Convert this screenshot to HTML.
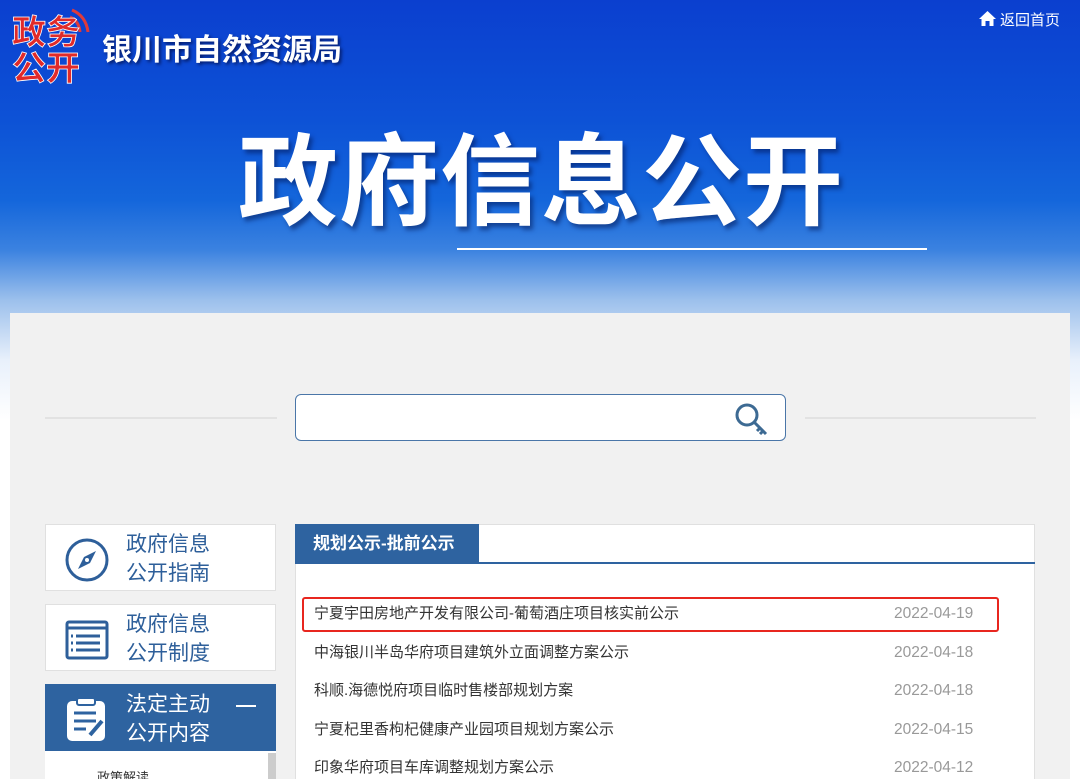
<!DOCTYPE html>
<html><head><meta charset="utf-8"><style>
*{margin:0;padding:0;box-sizing:border-box}
html{background:#fff;width:1080px;height:779px;overflow:hidden}
body{width:1080px;height:779px;overflow:hidden;position:relative;font-family:"Liberation Sans","Noto Sans CJK SC",sans-serif;background:#fff}
.bg{left:0;top:0;width:1080px;height:779px;background:linear-gradient(180deg,#0b3fcf 0px,#0d52d6 120px,#1466db 200px,#3b82e0 250px,#9cc0ec 300px,#e8f0fb 360px,#fff 420px)}
.abs{position:absolute}
.logo{left:10px;top:4px;width:82px;height:82px}
.org{left:102px;top:25px;color:#fff;font-size:30px;font-weight:bold;text-shadow:2px 2px 3px rgba(0,0,40,.6)}
.home{right:20px;top:9px;color:#fff;font-size:15px}
.title{left:238px;top:128px;color:#fff;font-size:100px;font-weight:bold;letter-spacing:1px;text-shadow:3px 4px 4px rgba(0,20,80,.5);line-height:1.1}
.uline{left:457px;top:248px;width:470px;height:2px;background:#fff}
.panel{left:10px;top:313px;width:1060px;height:466px;background:#f1f1f1}
.sline{top:417px;height:2px;background:#e2e2e2}
.search{left:295px;top:394px;width:491px;height:47px;border:1px solid #4a76a8;border-radius:6px;background:#fff}
.side{left:45px;width:231px;height:67px;background:#fff;border:1px solid #e0e0e0;color:#2e5f9a;font-size:21px;line-height:29px}
.side .t{position:absolute;left:80px;top:5px}
.side svg{position:absolute;left:18px;top:12px}
.main{left:295px;top:524px;width:740px;height:255px;background:#fff;border:1px solid #e0e0e0;border-bottom:none}
.tab{left:295px;top:524px;width:184px;height:40px;background:#2e63a0;color:#fff;font-weight:bold;font-size:17px;line-height:40px;padding-left:18px}
.tabline{left:479px;top:562px;width:556px;height:2px;background:#2e63a0}
.row{left:314px;font-size:15px;color:#333;width:664px;height:20px;line-height:20px}
.row span{position:absolute;left:580px;top:0;color:#999;font-size:15.5px}
.red{left:302px;top:597px;width:697px;height:35px;border:2px solid #e8261f;border-radius:3px}
</style></head><body>
<div class="abs bg"></div>
<svg class="abs logo" viewBox="0 0 82 82">
<path d="M62 6 q14 6 16 22 M60 13 q9 4 10 15" stroke="#e03a3a" stroke-width="3" fill="none"/>
<text x="2" y="40" font-size="34" font-weight="bold" fill="#e02a2a" font-family="Noto Sans CJK SC" stroke="#fff" stroke-width="0.8">政务</text>
<text x="2" y="76" font-size="34" font-weight="bold" fill="#e02a2a" font-family="Noto Sans CJK SC" stroke="#fff" stroke-width="0.8">公开</text>
</svg>
<div class="abs org">银川市自然资源局</div>
<div class="abs home"><svg width="17" height="15" viewBox="0 0 17 15" style="vertical-align:-1px;margin-right:4px"><path d="M8.5 0 L17 8 L14.5 8 L14.5 15 L10.5 15 L10.5 10 L6.5 10 L6.5 15 L2.5 15 L2.5 8 L0 8Z" fill="#fff"/></svg>返回首页</div>
<div class="abs title">政府信息公开</div>
<div class="abs uline"></div>
<div class="abs panel"></div>
<div class="abs sline" style="left:45px;width:232px"></div>
<div class="abs sline" style="left:805px;width:231px"></div>
<div class="abs search"><svg class="abs" style="left:436px;top:6px" width="40" height="36" viewBox="0 0 40 36"><circle cx="15" cy="14" r="10" stroke="#3d6a93" stroke-width="3" fill="none"/><path d="M22 21 L34 33 M28 27 l-3 3 M31 30 l-3 3" stroke="#3d6a93" stroke-width="3"/></svg></div>
<div class="abs side" style="top:524px"><svg width="46" height="46" viewBox="0 0 46 46"><circle cx="23" cy="23" r="20" stroke="#2e5f9a" stroke-width="3" fill="none"/><path d="M32 14 L20 20 L14 32 L26 26Z" fill="#2e5f9a"/><circle cx="23" cy="23" r="2" fill="#fff"/></svg><div class="t">政府信息<br>公开指南</div></div>
<div class="abs side" style="top:604px"><svg width="46" height="46" viewBox="0 0 46 46"><rect x="3" y="5" width="40" height="36" stroke="#2e5f9a" stroke-width="3" fill="none" rx="2"/><path d="M3 11 h40 M12 19 h24 M12 26 h24 M12 33 h24 M7 19h2M7 26h2M7 33h2" stroke="#2e5f9a" stroke-width="3"/></svg><div class="t">政府信息<br>公开制度</div></div>
<div class="abs side" style="top:684px;background:#2e63a0;border-color:#2e63a0;color:#fff"><svg width="46" height="46" viewBox="0 0 46 46"><rect x="3" y="4" width="38" height="40" rx="5" fill="#fff"/><rect x="13" y="1" width="18" height="7" rx="2" fill="#fff" stroke="#2e63a0" stroke-width="2"/><path d="M10 16h22M10 24h22M10 32h12" stroke="#2e63a0" stroke-width="3"/><path d="M26 38 L38 24" stroke="#2e63a0" stroke-width="4"/></svg><div class="t">法定主动<br>公开内容</div><div style="position:absolute;left:190px;top:20px;width:20px;height:2px;background:#fff"></div></div>
<div class="abs" style="left:45px;top:751px;width:231px;height:28px;background:#fff"><div style="position:absolute;right:0;top:2px;width:8px;height:26px;background:#ccc"></div><div style="position:absolute;left:52px;top:16px;font-size:13px;color:#333">政策解读</div></div>
<div class="abs main"></div>
<div class="abs tab">规划公示-批前公示</div>
<div class="abs tabline"></div>
<div class="abs row" style="top:604px">宁夏宇田房地产开发有限公司-葡萄酒庄项目核实前公示<span>2022-04-19</span></div>
<div class="abs row" style="top:643px">中海银川半岛华府项目建筑外立面调整方案公示<span>2022-04-18</span></div>
<div class="abs row" style="top:681px">科顺.海德悦府项目临时售楼部规划方案<span>2022-04-18</span></div>
<div class="abs row" style="top:720px">宁夏杞里香枸杞健康产业园项目规划方案公示<span>2022-04-15</span></div>
<div class="abs row" style="top:758px">印象华府项目车库调整规划方案公示<span>2022-04-12</span></div>
<div class="abs red"></div>
</body></html>
